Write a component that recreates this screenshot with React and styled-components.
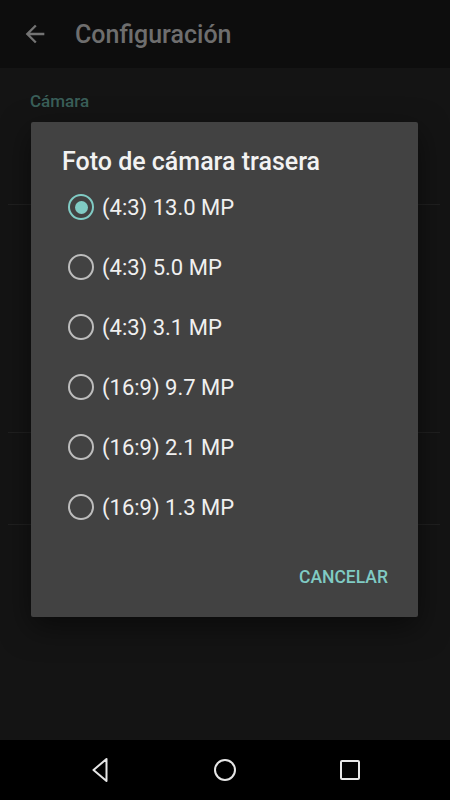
import React from "react";
import styled, { createGlobalStyle } from "styled-components";

const Global = createGlobalStyle`
  html, body { margin: 0; padding: 0; background: #141414; }
  body { font-family: Roboto, "Noto Sans", "Liberation Sans", sans-serif; }
  * { box-sizing: border-box; }
`;

const Page = styled.div`
  position: relative;
  width: 450px;
  height: 800px;
  display: flex;
  flex-direction: column;
  background: #141414;
  overflow: hidden;
`;

const AppBar = styled.header`
  height: 68px;
  flex: none;
  display: flex;
  align-items: center;
  padding-left: 21px;
  gap: 26px;
  background: #0d0d0d;
`;

const BackIcon = styled.svg`
  width: 28px;
  height: 28px;
  fill: #737373;
  flex: none;
`;

const AppTitle = styled.h1`
  margin: 0;
  font-size: 25px;
  font-weight: 500;
  color: #6e6e6e;
`;

const Content = styled.main`
  flex: 1;
  display: flex;
  flex-direction: column;
`;

const SectionHeader = styled.div`
  height: 50px;
  padding: 23px 0 0 30px;
  font-size: 17px;
  font-weight: 500;
  color: #3a5f59;
`;

const Row = styled.div`
  height: ${(p) => p.$h}px;
  margin: 0 10px 0 8px;
  border-bottom: 1px solid #202020;
`;

const NavBar = styled.nav`
  height: 60px;
  flex: none;
  background: #000;
  display: flex;
  justify-content: center;
  align-items: center;
`;

const NavButton = styled.div`
  width: 125px;
  height: 60px;
  display: flex;
  align-items: center;
  justify-content: center;
`;

const NavIcon = styled.svg`
  width: 26px;
  height: 26px;
  fill: none;
  stroke: #e6e6e6;
  stroke-width: 2;
  stroke-linejoin: round;
`;

const Dialog = styled.div`
  position: absolute;
  left: 31px;
  top: 122px;
  width: 387px;
  height: 495px;
  background: #424242;
  border-radius: 2px;
  box-shadow: 0 10px 30px rgba(0, 0, 0, 0.5);
  display: flex;
  flex-direction: column;
`;

const DialogTitle = styled.h2`
  margin: 0;
  padding: 26px 0 0 31px;
  height: 55px;
  font-size: 25px;
  font-weight: 500;
  line-height: 28px;
  color: #f2f2f2;
`;

const OptionList = styled.div`
  display: flex;
  flex-direction: column;
  padding-left: 37px;
`;

const Option = styled.label`
  height: 60px;
  display: flex;
  align-items: center;
  gap: 8px;
  font-size: 22px;
  color: #f0f0f0;
`;

const Radio = styled.span`
  width: 26px;
  height: 26px;
  border-radius: 50%;
  border: 2.5px solid ${(p) => (p.$checked ? "#80cbc4" : "#bdbdbd")};
  display: flex;
  align-items: center;
  justify-content: center;
  flex: none;
  &::after {
    content: "";
    width: 13px;
    height: 13px;
    border-radius: 50%;
    background: #80cbc4;
    display: ${(p) => (p.$checked ? "block" : "none")};
  }
`;

const Actions = styled.div`
  flex: 1;
  display: flex;
  justify-content: flex-end;
  align-items: center;
  padding: 0 30px 0 0;
`;

const TextButton = styled.button`
  background: none;
  border: none;
  padding: 0;
  font-family: inherit;
  font-size: 17.5px;
  font-weight: 500;
  color: #80cbc4;
`;

const options = [
  "(4:3) 13.0 MP",
  "(4:3) 5.0 MP",
  "(4:3) 3.1 MP",
  "(16:9) 9.7 MP",
  "(16:9) 2.1 MP",
  "(16:9) 1.3 MP",
];

export default function App() {
  return (
    <Page>
      <Global />
      <AppBar>
        <BackIcon viewBox="0 0 24 24">
          <path d="M20 11H7.83l5.59-5.59L12 4l-8 8 8 8 1.41-1.41L7.83 13H20v-2z" />
        </BackIcon>
        <AppTitle>Configuración</AppTitle>
      </AppBar>
      <Content>
        <SectionHeader>Cámara</SectionHeader>
        <Row $h={87} />
        <Row $h={228} />
        <Row $h={92} />
      </Content>
      <NavBar>
        <NavButton>
          <NavIcon viewBox="0 0 26 26">
            <path d="M19.5 2 L19.5 24 L6.5 13 Z" />
          </NavIcon>
        </NavButton>
        <NavButton>
          <NavIcon viewBox="0 0 26 26">
            <circle cx="13" cy="13" r="10" />
          </NavIcon>
        </NavButton>
        <NavButton>
          <NavIcon viewBox="0 0 26 26">
            <rect x="4" y="4" width="18" height="18" rx="1" />
          </NavIcon>
        </NavButton>
      </NavBar>
      <Dialog role="dialog">
        <DialogTitle>Foto de cámara trasera</DialogTitle>
        <OptionList>
          {options.map((o, i) => (
            <Option key={o}>
              <Radio $checked={i === 0} />
              {o}
            </Option>
          ))}
        </OptionList>
        <Actions>
          <TextButton>CANCELAR</TextButton>
        </Actions>
      </Dialog>
    </Page>
  );
}
